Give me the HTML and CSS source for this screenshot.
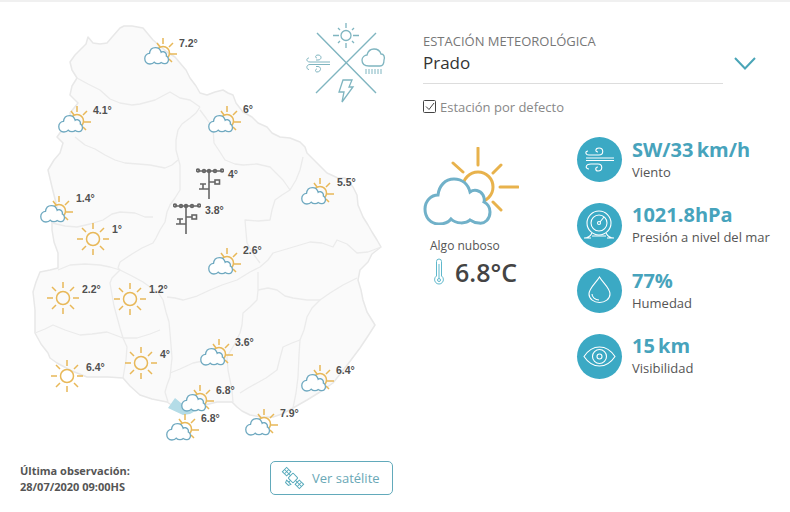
FILE: index.html
```html
<!DOCTYPE html>
<html lang="es">
<head>
  <meta charset="UTF-8" />
  <title>Estación meteorológica</title>
  <link rel="stylesheet" href="styles.css">
</head>
<body>
<svg class="defs" width="0" height="0">
  <defs>
    <path id="cloud-shape" d="M15 46C6 46 1 39 1 31C1 23 7 17 14 17C15 8 21 1 30 1C38 1 44 6 46 14C50 11 56 12 59 17C60 19 61 21 60 24C64 26 66 30 66 34C66 41 61 46 55 45C52 45 49 44 46 42C42 46 32 46 27 41C24 45 19 46 15 46Z"/>
    <symbol id="sun" viewBox="0 0 34 34">
      <g class="sun-lines">
        <circle cx="17" cy="17" r="6.5"/>
        <path d="M17 1V7M17 27V33M1 17H7M27 17H33M6 6L10 10M24 24L28 28M6 28L10 24M24 10L28 6"/>
      </g>
    </symbol>
    <symbol id="partly" viewBox="0 0 34 27">
      <g class="sun-lines">
        <circle cx="19" cy="15" r="6.5"/>
        <path d="M19 0V6M26 16H33M25 9L29 5M25 21L28 24M13 5L16 9"/>
      </g>
      <use href="#cloud-shape" class="small-cloud" transform="translate(0.4 9.2) scale(0.365)"/>
    </symbol>
    <symbol id="station" viewBox="0 0 28 32">
      <g class="station-lines">
        <path d="M13 2V31M2 3H26M13 14H19M3 21H13M7 21V16M4 16H10"/>
        <rect x="19" y="12" width="4.5" height="4"/>
        <circle cx="2" cy="2.5" r="1.4"/><circle cx="8" cy="3" r="1.4"/><circle cx="13" cy="3" r="1.4"/><circle cx="19" cy="3" r="1.4"/><circle cx="26" cy="2.5" r="1.4"/>
      </g>
    </symbol>
  </defs>
</svg>

<div class="page">
  <div class="left-col">
    <svg class="map" viewBox="0 2 410 450" width="410" height="450">
      <path class="country" d="M120 28L124 26L132 26L143 28L148 34L153 40L160 46L167 52L175 57L180 63L186 70L190 78L196 86L200 93L207 95L215 92L223 90L228 93L233 95L236 103L243 112L252 117L258 123L267 127L272 133L280 137L290 138L300 142L305 147L307 153L315 161L327 173L338 178L345 178L353 187L357 195L358 205L363 217L368 225L372 232L377 240L381 247L372 254L368 262L360 270L358 280L361 290L363 300L367 312L375 325L368 336L360 348L348 364L333 383L320 392L307 400L293 408L282 414L273 417L262 417L250 415L242 411L237 407L232 402L217 402L205 405L196 411L180 410L173 406L167 402L152 399L140 395L130 386L123 378L108 377L87 377L72 371L57 363L50 358L48 353L41 344L35 333L35 322L35 310L33 292L36 282L40 272L50 270L58 268L58 260L58 253L54 242L52 230L52 222L57 207L52 187L48 170L54 160L60 153L63 143L57 137L62 130L72 125L70 113L78 103L70 95L72 86L77 78L72 70L70 62L75 55L80 50L86 44L88 37L93 43L100 44L107 43L113 36Z"/>
      <path class="region" d="M168 408L175 398L181 403L190 409L197 410L190 414L183 415Z"/>
      <g class="borders">
        <path d="M77 78L88 84L100 90L110 99L120 103L132 105L140 104L155 100L170 92L180 98L190 100L200 107"/>
        <path d="M75 137L85 145L95 149L105 155L115 160L125 163L138 164L150 165L165 168L172 165L178 160"/>
        <path d="M200 107L196 113L190 118L182 124L178 130L176 140L176 150L180 165L180 178L180 190L175 198L170 205L167 212L165 222L160 230L156 238L153 243L142 248L132 254L120 262"/>
        <path d="M200 110L206 118L213 128L214 143L220 152L225 160L235 164L243 165L257 164L270 167L276 173L283 180L290 190"/>
        <path d="M303 157L300 170L296 180L290 190L282 195L275 200L272 210L270 220L258 221L245 220L246 232L247 243L254 255L260 263"/>
        <path d="M52 223L65 226L77 227L90 224L103 220L112 214L120 212L135 213L145 217L153 217"/>
        <path d="M58 270L70 265L85 264L100 265L110 267L120 270L112 278L110 283L112 295L114 306L117 317L120 328L123 338"/>
        <path d="M120 262L118 268L120 270L132 276L143 282L150 287L158 292L163 300L166 312L169 322L170 333L171 345L172 358L170 377L167 385L165 392L168 402"/>
        <path d="M35 333L45 329L53 325L65 330L80 335L92 334L107 332L115 335L123 338L127 347L126 360L123 378"/>
        <path d="M123 338L137 338L150 334L160 330"/>
        <path d="M167 297L175 298L183 300L197 296L210 290L222 285L237 280L250 272L260 267L268 260L273 253L290 248L310 242L322 243L333 247L337 240L347 244L357 253L368 252L381 247"/>
        <path d="M258 272L258 282L258 290L257 300L250 307L243 313L242 325L240 333L234 345L227 357L228 370L230 380L232 390L233 402"/>
        <path d="M258 290L268 288L277 290L285 296L293 298L307 300L320 300L330 293L343 285L357 278"/>
        <path d="M320 300L312 308L307 317L304 330L300 340L299 355L298 377L296 393L293 408"/>
        <path d="M300 340L292 343L283 347L280 358L277 370L266 378L257 383L248 388L240 393"/>
        <path d="M170 373L180 369L193 363L208 360L223 357"/>
      </g>

      <use href="#station" x="196" y="168" width="28" height="32"/>
      <use href="#station" x="173" y="203" width="28" height="32"/>

      <use href="#sun" x="76" y="222" width="34" height="34"/>
      <use href="#sun" x="46" y="281" width="34" height="34"/>
      <use href="#sun" x="113" y="282" width="34" height="34"/>
      <use href="#sun" x="124" y="346" width="34" height="34"/>
      <use href="#sun" x="50" y="359" width="34" height="34"/>

      <use href="#partly" x="144" y="38" width="34" height="27"/>
      <use href="#partly" x="58" y="106" width="34" height="27"/>
      <use href="#partly" x="40" y="196" width="34" height="27"/>
      <use href="#partly" x="208" y="106" width="34" height="27"/>
      <use href="#partly" x="301" y="178" width="34" height="27"/>
      <use href="#partly" x="208" y="248" width="34" height="27"/>
      <use href="#partly" x="200" y="339" width="34" height="27"/>
      <use href="#partly" x="301" y="365" width="34" height="27"/>
      <use href="#partly" x="181" y="385" width="34" height="27"/>
      <use href="#partly" x="166" y="414" width="34" height="27"/>
      <use href="#partly" x="245" y="409" width="34" height="27"/>

      <g class="map-temps">
        <text x="179" y="47">7.2°</text>
        <text x="93" y="114">4.1°</text>
        <text x="76" y="202">1.4°</text>
        <text x="243" y="113">6°</text>
        <text x="337" y="186">5.5°</text>
        <text x="228" y="178">4°</text>
        <text x="205" y="214">3.8°</text>
        <text x="112" y="233">1°</text>
        <text x="243" y="254">2.6°</text>
        <text x="82" y="293">2.2°</text>
        <text x="149" y="293">1.2°</text>
        <text x="160" y="358">4°</text>
        <text x="235" y="346">3.6°</text>
        <text x="86" y="371">6.4°</text>
        <text x="336" y="374">6.4°</text>
        <text x="216" y="394">6.8°</text>
        <text x="201" y="422">6.8°</text>
        <text x="280" y="417">7.9°</text>
      </g>

      <g class="legend">
        <path class="legend-cross" d="M317 33L376 93M376 33L316 93"/>
        <circle cx="346" cy="35.5" r="5"/>
        <path d="M346 23V28M346 43V48M333 35.5H339M353 35.5H359M338 28L340 30M352 41L354 43M338 43L340 41M352 30L354 28"/>
        <path class="legend-thin" d="M316 62H330M316 64.500H330"/>
        <path class="legend-thin" d="M316 60H318C322 60 322 55 318 55C315 55 315 58 317 58M316 62H310C306 62 306 58 309 58M316 64.500H310C306 64.500 306 69.500 309 69.500M316 66.500H318C322 67 321 72 317 72C315 72 315 69 317 69"/>
        <path d="M369 66C364 66 362 63 362 60C362 57 365 55 367 55C368 51 371 49 374 49C377 49 380 51 381 54C384 54 385 57 384 60C384 63 383 66 380 66Z"/>
        <path class="legend-thin" d="M366 69V74M369 69V74M372 69V74M375 69V74M378 69V74M381 69V74"/>
        <path d="M343 80L352 80L349 87L353 87L342 102L344 92L339 92Z"/>
      </g>
    </svg>

    <div class="footer">
      <div class="last-obs">Última observación:<br>28/07/2020 09:00HS</div>
      <button class="satellite-btn" type="button">
        <svg width="20" height="20" viewBox="0 0 20 20">
          <g transform="rotate(-45 10 10)">
            <rect x="6.500" y="6.500" width="7" height="7" rx="1"/>
            <path d="M4 10H6.500M1.500 8L4 7V13L1.500 12Z"/>
            <rect x="7" y="-2" width="6" height="6"/>
            <rect x="7" y="16" width="6" height="6"/>
            <path d="M10 4V6.500M10 13.500V16M7 1H13M10 -2V4M7 19H13M10 16V22"/>
          </g>
        </svg>
        Ver satélite
      </button>
    </div>
  </div>

  <div class="right-col">
    <div class="station-select">
      <div class="select-text">
        <div class="select-label">ESTACIÓN METEOROLÓGICA</div>
        <div class="select-value">Prado</div>
      </div>
      <svg class="chevron" width="24" height="15" viewBox="0 0 24 15"><path d="M2 2L12 12.500L22 2"/></svg>
    </div>
    <label class="default-check">
      <svg width="14" height="14" viewBox="0 0 14 14"><rect x="0.500" y="0.500" width="12" height="12" rx="1"/><path d="M3 6.500L6 9.500L11 3"/></svg>
      Estación por defecto
    </label>

    <div class="weather">
      <div class="current">
        <svg class="big-icon" width="96" height="78" viewBox="0 0 96 78">
          <g class="big-sun">
            <circle cx="55" cy="40" r="15"/>
            <path d="M55 1V18M77 40H95M70 26L78 18M70 55L78 63M30 16L40 25"/>
          </g>
          <use href="#cloud-shape" class="big-cloud" transform="translate(1 31)"/>
        </svg>
        <div class="current-text">Algo nuboso</div>
        <div class="current-temp">
          <svg width="10" height="29" viewBox="0 0 10 29">
            <path d="M2.500 18V3.500A2.500 2.500 0 0 1 7.500 3.500V18A4.400 4.400 0 1 1 2.500 18Z"/>
            <circle cx="5" cy="22" r="1.500"/>
            <path d="M5 20V6"/>
          </svg>
          <span>6.8°C</span>
        </div>
      </div>

      <div class="metrics">
        <div class="metric">
          <div class="metric-icon">
            <svg width="45" height="45" viewBox="0 0 45 45">
              <path d="M9 21H37M9 23.500H37M12 18H22C27 18 27 11 22 11C18 11 18 15 21 15M14 27H21C26 27 26 34 21 34C18 34 18 30 21 30M12 18C8 18 8 14 11 14M14 27C8 27 8 32 12 32"/>
            </svg>
          </div>
          <div class="metric-text">
            <div class="metric-value">SW/33 km/h</div>
            <div class="metric-label">Viento</div>
          </div>
        </div>
        <div class="metric">
          <div class="metric-icon">
            <svg width="45" height="45" viewBox="0 0 45 45">
              <circle cx="22" cy="20" r="12"/>
              <circle cx="22" cy="20" r="8"/>
              <circle cx="22" cy="20" r="1.500"/>
              <path d="M23 19L27 14M7 35C11 35 13 34 15 30M37 35C33 35 31 34 29 30M7 35H14M30 35H37M15 33H29"/>
            </svg>
          </div>
          <div class="metric-text">
            <div class="metric-value">1021.8hPa</div>
            <div class="metric-label">Presión a nivel del mar</div>
          </div>
        </div>
        <div class="metric">
          <div class="metric-icon">
            <svg width="45" height="45" viewBox="0 0 45 45">
              <path d="M22.500 9C19 15 12 20 12 26C12 31 17 34.500 22.500 34.500C28 34.500 33 31 33 26C33 20 26 15 22.500 9Z"/>
              <path d="M15 26C15 29 18 32 22 32"/>
            </svg>
          </div>
          <div class="metric-text">
            <div class="metric-value">77%</div>
            <div class="metric-label">Humedad</div>
          </div>
        </div>
        <div class="metric">
          <div class="metric-icon">
            <svg width="45" height="45" viewBox="0 0 45 45">
              <path d="M7 22.500C12 15 18 13 22.500 13C27 13 33 15 38 22.500C33 30 27 32 22.500 32C18 32 12 30 7 22.500Z"/>
              <circle cx="22.500" cy="22.500" r="7"/>
              <circle cx="22.500" cy="22.500" r="2.500"/>
            </svg>
          </div>
          <div class="metric-text">
            <div class="metric-value">15 km</div>
            <div class="metric-label">Visibilidad</div>
          </div>
        </div>
      </div>
    </div>
  </div>
</div>
</body>
</html>
```

FILE: styles.css
```css
* {
  box-sizing: border-box;
}

body {
  margin: 0;
  background-color: white;
  font-family: 'Open Sans', sans-serif;
  color: #555;
  overflow: hidden;
}

.defs {
  position: absolute;
}

.page {
  display: flex;
  height: 512px;
  border-top: 2px solid #f0f0f0;
}

.left-col {
  width: 410px;
}

.map {
  display: block;
}

.country {
  fill: #fafafa;
  stroke: #e8e8e8;
  stroke-width: 1.5;
  stroke-linejoin: round;
}

.region {
  fill: #b4dce7;
}

.borders path {
  fill: none;
  stroke: #ebebeb;
  stroke-width: 1.3;
  stroke-linejoin: round;
}

.sun-lines {
  fill: none;
  stroke: #e8b858;
  stroke-width: 1.5;
}

.small-cloud {
  fill: white;
  stroke: #6fa9c0;
  stroke-width: 3.6;
}

.station-lines {
  fill: none;
  stroke: #666;
  stroke-width: 1.6;
}

.map-temps text {
  font-family: 'Liberation Sans', Arial, sans-serif;
  font-size: 10.5px;
  font-weight: bold;
  fill: #505050;
}

.legend {
  fill: none;
  stroke: #7fb5c0;
  stroke-width: 1.3;
}

.legend-cross {
  stroke-width: 1.4;
}

.legend-thin {
  stroke-width: 1;
}

.footer {
  display: flex;
  align-items: center;
  justify-content: space-between;
  padding: 9px 17px 0 20px;
}

.last-obs {
  padding-top: 2px;
  font-size: 11px;
  font-weight: 700;
  line-height: 16px;
  color: #555;
}

.satellite-btn {
  display: flex;
  align-items: center;
  gap: 9px;
  width: 123px;
  height: 34px;
  padding: 0 0 0 12px;
  background: white;
  border: 1px solid #62aabb;
  border-radius: 5px;
  font-family: inherit;
  font-size: 13px;
  color: #6aa8b6;
}

.satellite-btn svg {
  fill: none;
  stroke: #55a9bb;
  stroke-width: 1;
  flex-shrink: 0;
  overflow: visible;
}

.right-col {
  width: 380px;
  padding: 29px 0 0 13px;
}

.station-select {
  display: flex;
  align-items: center;
  width: 334px;
  height: 53px;
}

.select-text {
  width: 300px;
  height: 53px;
  border-bottom: 1px solid #ddd;
}

.select-label {
  font-size: 13px;
  line-height: 21px;
  color: #777;
}

.select-value {
  font-size: 17px;
  line-height: 22px;
  color: #333;
}

.chevron {
  margin: 12px 0 0 10px;
  fill: none;
  stroke: #4aa5b7;
  stroke-width: 2;
}

.default-check {
  display: flex;
  align-items: center;
  gap: 3px;
  height: 20px;
  margin-top: 13px;
  font-size: 13px;
  color: #888;
}

.default-check svg {
  fill: none;
  stroke: #444;
  stroke-width: 1;
}

.weather {
  display: flex;
  margin-top: 20px;
}

.current {
  width: 154px;
  padding-top: 10px;
}

.big-icon {
  display: block;
}

.big-sun {
  fill: none;
  stroke: #e8b24c;
  stroke-width: 3;
  stroke-linecap: round;
}

.big-cloud {
  fill: white;
  stroke: #71b1c9;
  stroke-width: 3;
}

.current-text {
  margin: 13px 0 0 7px;
  font-size: 12px;
  line-height: 16px;
  color: #555;
}

.current-temp {
  display: flex;
  align-items: center;
  gap: 11px;
  margin: 1px 0 0 11px;
  font-size: 25px;
  font-weight: 600;
  color: #444;
}

.current-temp svg {
  fill: none;
  stroke: #5fb8cc;
  stroke-width: 1;
}

.metrics {
  display: flex;
  flex-direction: column;
  gap: 20.5px;
}

.metric {
  display: flex;
  align-items: center;
  gap: 10px;
  height: 45px;
}

.metric-icon {
  width: 45px;
  height: 45px;
  border-radius: 50%;
  background-color: #3ba9c4;
}

.metric-icon svg {
  display: block;
  fill: none;
  stroke: white;
  stroke-width: 1.1;
}

.metric-text {
  padding-bottom: 2px;
}

.metric-value {
  font-size: 20px;
  font-weight: 700;
  line-height: 26px;
  color: #47a3bc;
  word-spacing: -2px;
}

.metric-label {
  font-size: 13px;
  line-height: 18px;
  color: #555;
}
```
